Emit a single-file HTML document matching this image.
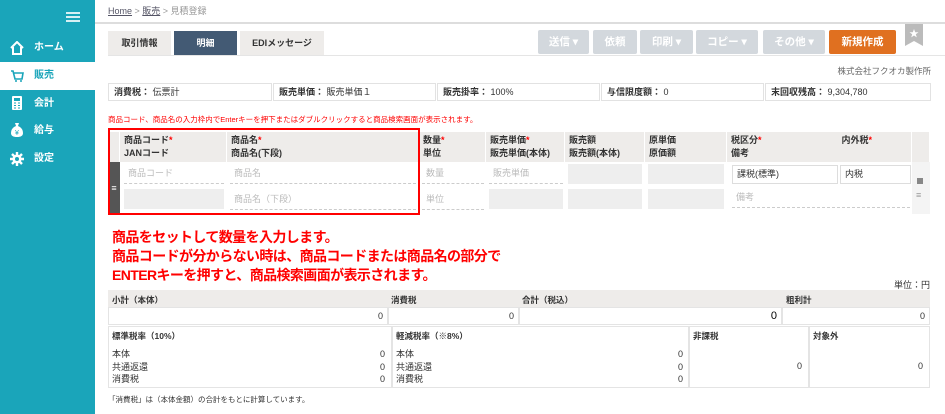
<!DOCTYPE html>
<html><head><meta charset="utf-8"><style>
*{box-sizing:border-box;margin:0;padding:0}
body{width:945px;height:414px;overflow:hidden;background:#fff;font-family:"Liberation Sans","Noto Sans CJK JP",sans-serif;font-size:9px;color:#333;position:relative}
.a{position:absolute}
.side{left:0;top:0;width:95px;height:414px;background:#1aa5ba}
.nav{left:0;width:95px;height:28px;color:#fff;font-size:10px;font-weight:bold;line-height:28px;padding-left:34px}
.btn{top:30px;height:24px;background:#d3d8dd;color:#fff;font-size:10.5px;font-weight:bold;text-align:center;line-height:24px;border-radius:2px}
.box{border:1px solid #e2e2e2;height:18px;top:83px;line-height:16px;padding-left:5px;font-size:9px}
.hd{background:#eeecea;top:132px;height:30px;font-size:9px;font-weight:bold;line-height:13px;padding:2px 4px;border-right:1px solid #fff}
.ph{color:#bbb;font-size:9px;border-bottom:1px dashed #ccc;height:21px;line-height:20px;padding-left:4px}
.gr{background:#eee;height:20px}
.r{color:red}
.tot{border:1px solid #e4e4e4}
</style></head><body>
<div class="a side"></div>
<div class="a" style="left:66px;top:12px;width:14px;height:2px;background:#d7f0f4;box-shadow:0 4px 0 #d7f0f4,0 8px 0 #d7f0f4"></div>
<div class="a nav" style="top:34px">ホーム</div>
<svg class="a" style="left:10px;top:41px" width="14" height="14" viewBox="0 0 14 14"><path d="M1 7L7 1L13 7M3 6V13H11V6" fill="none" stroke="#fff" stroke-width="2"/></svg>
<div class="a nav" style="top:62px;background:#fff;color:#1aa5ba">販売</div>
<svg class="a" style="left:10px;top:69px" width="14" height="14" viewBox="0 0 14 14"><path d="M1 2H3L5 10H12L13 4H4" fill="none" stroke="#1aa5ba" stroke-width="1.6"/><circle cx="6" cy="12" r="1" fill="#1aa5ba"/><circle cx="11" cy="12" r="1" fill="#1aa5ba"/></svg>
<div class="a nav" style="top:90px">会計</div>
<svg class="a" style="left:12px;top:96px" width="10" height="14" viewBox="0 0 10 14"><rect width="10" height="14" rx="1" fill="#fff"/><rect x="2" y="2" width="6" height="3" fill="#1aa5ba"/><path d="M2 7h2M6 7h2M2 9.5h2M6 9.5h2M2 12h2M6 12h2" stroke="#1aa5ba"/></svg>
<div class="a nav" style="top:117px">給与</div>
<svg class="a" style="left:10px;top:122px" width="14" height="16" viewBox="0 0 14 16"><path d="M5 1H9L8 4Q13 6 13 11Q13 15 7 15Q1 15 1 11Q1 6 6 4Z" fill="#fff"/><text x="7" y="13" font-size="7" fill="#1aa5ba" text-anchor="middle" font-family="Liberation Sans">¥</text></svg>
<div class="a nav" style="top:145px">設定</div>
<svg class="a" style="left:10px;top:152px" width="14" height="14" viewBox="0 0 14 14"><circle cx="7" cy="7" r="4.5" fill="#fff"/><path d="M7 0V14M0 7H14M2 2L12 12M12 2L2 12" stroke="#fff" stroke-width="2.4"/><circle cx="7" cy="7" r="2" fill="#1aa5ba"/></svg>

<div class="a" style="left:108px;top:4px;font-size:9px;color:#999"><span style="color:#556;text-decoration:underline">Home</span> &gt; <span style="color:#556;text-decoration:underline">販売</span> &gt; 見積登録</div>
<div class="a" style="left:95px;top:22px;width:850px;height:2px;background:#ddd"></div>

<div class="a" style="left:108px;top:31px;width:63px;height:24px;background:#eeecea;font-size:9px;font-weight:bold;text-align:center;line-height:24px">取引情報</div>
<div class="a" style="left:174px;top:31px;width:63px;height:24px;background:#435a74;color:#fff;font-size:9px;font-weight:bold;text-align:center;line-height:24px">明細</div>
<div class="a" style="left:240px;top:31px;width:84px;height:24px;background:#eeecea;font-size:9px;font-weight:bold;text-align:center;line-height:24px">EDIメッセージ</div>
<div class="a" style="left:108px;top:55px;width:837px;height:1px;background:#e5e5e5"></div>

<div class="a btn" style="left:538px;width:51px">送信 ▾</div>
<div class="a btn" style="left:593px;width:44px">依頼</div>
<div class="a btn" style="left:640px;width:53px">印刷 ▾</div>
<div class="a btn" style="left:696px;width:62px">コピー ▾</div>
<div class="a btn" style="left:763px;width:62px">その他 ▾</div>
<div class="a btn" style="left:829px;width:67px;background:#e07020">新規作成</div>
<svg class="a" style="left:905px;top:24px" width="18" height="22" viewBox="0 0 18 22"><path d="M0 0H18V22L9 17L0 22Z" fill="#bbb"/><path d="M9 5L10.2 8.2H13.5L10.8 10.2L11.8 13.4L9 11.5L6.2 13.4L7.2 10.2L4.5 8.2H7.8Z" fill="#fff"/></svg>
<div class="a" style="right:14px;top:65px;font-size:8.5px;color:#666">株式会社フクオカ製作所</div>

<div class="a box" style="left:108px;width:164px"><b>消費税：</b> 伝票計</div>
<div class="a box" style="left:273px;width:163px"><b>販売単価：</b> 販売単価１</div>
<div class="a box" style="left:437px;width:163px"><b>販売掛率：</b> 100%</div>
<div class="a box" style="left:601px;width:163px"><b>与信限度額：</b> 0</div>
<div class="a box" style="left:765px;width:166px"><b>末回収残高：</b> 9,304,780</div>
<div class="a" style="left:108px;top:114px;font-size:7.5px;color:red">商品コード、商品名の入力枠内でEnterキーを押下またはダブルクリックすると商品検索画面が表示されます。</div>

<div class="a" style="left:108px;top:132px;width:822px;height:82px;background:#f4f4f4"></div>
<div class="a hd" style="left:108px;width:12px"></div>
<div class="a hd" style="left:120px;width:107px">商品コード<span class="r">*</span><br>JANコード</div>
<div class="a hd" style="left:227px;width:192px">商品名<span class="r">*</span><br>商品名(下段)</div>
<div class="a hd" style="left:419px;width:67px">数量<span class="r">*</span><br>単位</div>
<div class="a hd" style="left:486px;width:79px">販売単価<span class="r">*</span><br>販売単価(本体)</div>
<div class="a hd" style="left:565px;width:80px">販売額<br>販売額(本体)</div>
<div class="a hd" style="left:645px;width:82px">原単価<br>原価額</div>
<div class="a hd" style="left:727px;width:185px">税区分<span class="r">*</span><span style="margin-left:80px">内外税<span class="r">*</span></span><br>備考</div>
<div class="a hd" style="left:912px;width:18px"></div>
<div class="a" style="left:108px;top:162px;width:12px;height:52px;background:#555;color:#fff;font-size:9px;text-align:center;line-height:52px">≡</div>
<div class="a" style="left:120px;top:162px;width:792px;height:52px;background:#fff"></div>
<div class="a ph" style="left:124px;top:163px;width:100px">商品コード</div>
<div class="a gr" style="left:124px;top:189px;width:100px"></div>
<div class="a ph" style="left:230px;top:163px;width:186px">商品名</div>
<div class="a ph" style="left:230px;top:189px;width:186px">商品名（下段）</div>
<div class="a ph" style="left:422px;top:163px;width:62px">数量</div>
<div class="a ph" style="left:422px;top:189px;width:62px">単位</div>
<div class="a ph" style="left:489px;top:163px;width:74px">販売単価</div>
<div class="a gr" style="left:489px;top:189px;width:74px"></div>
<div class="a gr" style="left:568px;top:164px;width:74px"></div>
<div class="a gr" style="left:568px;top:189px;width:74px"></div>
<div class="a gr" style="left:648px;top:164px;width:76px"></div>
<div class="a gr" style="left:648px;top:189px;width:76px"></div>
<div class="a" style="left:732px;top:165px;width:106px;height:19px;border:1px solid #ddd;line-height:17px;padding-left:4px">課税(標準)</div>
<div class="a" style="left:840px;top:165px;width:71px;height:19px;border:1px solid #ddd;line-height:17px;padding-left:4px">内税</div>
<div class="a ph" style="left:732px;top:187px;width:178px">備考</div>
<div class="a" style="left:917px;top:178px;width:6px;height:6px;background:#888"></div>
<div class="a" style="left:916px;top:190px;color:#999;font-size:9px">≡</div>
<div class="a" style="left:108px;top:128px;width:312px;height:87px;border:2px solid red"></div>

<div class="a" style="left:112px;top:228px;font-size:14px;font-weight:bold;color:red;line-height:19px;letter-spacing:-0.6px">商品をセットして数量を入力します。<br>商品コードが分からない時は、商品コードまたは商品名の部分で<br>ENTERキーを押すと、商品検索画面が表示されます。</div>
<div class="a" style="right:15px;top:278px;font-size:9px">単位：円</div>

<div class="a" style="left:108px;top:290px;width:822px;height:17px;background:#eeecea"></div>
<div class="a" style="left:112px;top:294px;font-size:8.5px;font-weight:bold">小計（本体）</div>
<div class="a" style="left:391px;top:294px;font-size:8.5px;font-weight:bold">消費税</div>
<div class="a" style="left:522px;top:294px;font-size:8.5px;font-weight:bold">合計（税込）</div>
<div class="a" style="left:786px;top:294px;font-size:8.5px;font-weight:bold">粗利計</div>
<div class="a tot" style="left:108px;top:307px;width:280px;height:18px;text-align:right;padding:3px 4px">0</div>
<div class="a tot" style="left:388px;top:307px;width:131px;height:18px;text-align:right;padding:3px 4px">0</div>
<div class="a tot" style="left:519px;top:307px;width:263px;height:18px;text-align:right;padding:2px 4px;font-size:11px;color:#000">0</div>
<div class="a tot" style="left:782px;top:307px;width:148px;height:18px;text-align:right;padding:3px 4px">0</div>

<div class="a tot" style="left:108px;top:326px;width:284px;height:62px"></div>
<div class="a tot" style="left:392px;top:326px;width:297px;height:62px"></div>
<div class="a tot" style="left:689px;top:326px;width:120px;height:62px"></div>
<div class="a tot" style="left:809px;top:326px;width:121px;height:62px"></div>
<div class="a" style="left:112px;top:330px;font-size:8.5px;font-weight:bold">標準税率（10%）</div>
<div class="a" style="left:396px;top:330px;font-size:8.5px;font-weight:bold">軽減税率（※8%）</div>
<div class="a" style="left:693px;top:330px;font-size:8.5px;font-weight:bold">非課税</div>
<div class="a" style="left:813px;top:330px;font-size:8.5px;font-weight:bold">対象外</div>
<div class="a" style="left:112px;top:348px;width:273px;line-height:12.5px">本体<span style="float:right">0</span><br>共通返還<span style="float:right">0</span><br>消費税<span style="float:right">0</span></div>
<div class="a" style="left:396px;top:348px;width:287px;line-height:12.5px">本体<span style="float:right">0</span><br>共通返還<span style="float:right">0</span><br>消費税<span style="float:right">0</span></div>
<div class="a" style="left:797px;top:361px">0</div>
<div class="a" style="left:918px;top:361px">0</div>
<div class="a" style="left:108px;top:394px;font-size:7.5px">「消費税」は（本体金額）の合計をもとに計算しています。</div>
</body></html>
